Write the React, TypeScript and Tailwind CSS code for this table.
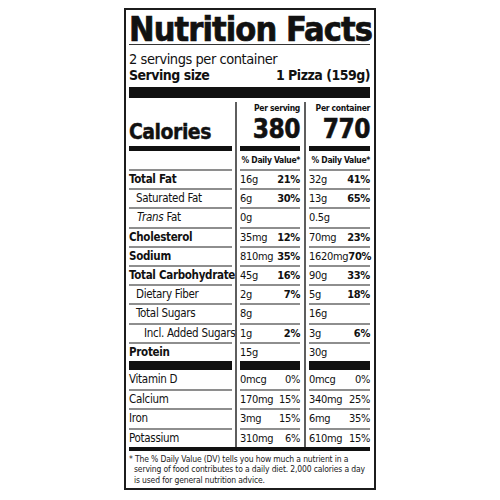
import type { ReactNode } from "react";

type Nutrient = {
  label: ReactNode;
  bold?: boolean;
  indent?: string;
  a: string;
  ap?: string;
  b: string;
  bp?: string;
};

const nutrients: Nutrient[] = [
  { label: "Total Fat", bold: true, a: "16g", ap: "21%", b: "32g", bp: "41%" },
  { label: "Saturated Fat", indent: "pl-[7px]", a: "6g", ap: "30%", b: "13g", bp: "65%" },
  { label: <><i>Trans</i> Fat</>, indent: "pl-[8px]", a: "0g", b: "0.5g" },
  { label: "Cholesterol", bold: true, a: "35mg", ap: "12%", b: "70mg", bp: "23%" },
  { label: "Sodium", bold: true, a: "810mg", ap: "35%", b: "1620mg", bp: "70%" },
  { label: "Total Carbohydrate", bold: true, a: "45g", ap: "16%", b: "90g", bp: "33%" },
  { label: "Dietary Fiber", indent: "pl-[7px]", a: "2g", ap: "7%", b: "5g", bp: "18%" },
  { label: "Total Sugars", indent: "pl-[7px]", a: "8g", b: "16g" },
  { label: "Incl. Added Sugars", indent: "pl-[15px]", a: "1g", ap: "2%", b: "3g", bp: "6%" },
  { label: "Protein", bold: true, a: "15g", b: "30g" },
];

const vitamins = [
  ["Vitamin D", "0mcg", "0%", "0mcg", "0%"],
  ["Calcium", "170mg", "15%", "340mg", "25%"],
  ["Iron", "3mg", "15%", "6mg", "35%"],
  ["Potassium", "310mg", "6%", "610mg", "15%"],
];

// vertical rule sitting in the gap between columns
function Gap({ wide }: { wide?: boolean }) {
  return (
    <div className={`flex justify-center ${wide ? "w-[9px]" : "w-[8px]"}`}>
      <div className="w-[2px] bg-[#5e5e5e]" />
    </div>
  );
}

function Cols({ className, label, a, b }: { className: string; label?: ReactNode; a?: ReactNode; b?: ReactNode }) {
  return (
    <div className={`flex ${className}`}>
      <div className="w-[103px] flex-none">{label}</div>
      <Gap />
      <div className="w-[60px] flex-none">{a}</div>
      <Gap wide />
      <div className="w-[61px] flex-none">{b}</div>
    </div>
  );
}

function Rule({ height, color }: { height: string; color: string }) {
  const bar = <div className={`h-full ${color}`} />;
  return <Cols className={height} label={bar} a={bar} b={bar} />;
}

function Amount({ v, p, boldPct }: { v: string; p?: string; boldPct?: boolean }) {
  return (
    <div className="flex h-full items-center justify-between whitespace-nowrap text-[11px] tracking-[-0.3px]">
      <span>{v}</span>
      {p && <span className={boldPct ? "font-bold" : ""}>{p}</span>}
    </div>
  );
}

export default function App() {
  return (
    <div className="flex min-h-[500px] justify-center bg-white">
      <div className="mt-[8px] h-[482px] w-[252px] border-2 border-[#1c1c1c] pl-[3px] pr-[4px] font-['DejaVu_Sans_Condensed','Liberation_Sans',sans-serif] text-[#111]">
        <div className="h-[35px] border-b border-[#333] pt-[3px]">
          <h1 className="h-[31px] text-[34px] font-bold leading-[32px] tracking-[-0.9px] whitespace-nowrap [-webkit-text-stroke:0.7px_#111]">
            Nutrition Facts
          </h1>
        </div>
        <p className="mt-[6px] text-[14.5px] leading-[16px] tracking-[-0.45px] whitespace-nowrap">
          2 servings per container
        </p>
        <div className="flex justify-between text-[14px] font-bold leading-[16px] tracking-[-0.5px] whitespace-nowrap">
          <span>Serving size</span>
          <span>1 Pizza (159g)</span>
        </div>
        <div className="mt-[4px] h-[11px] bg-[#111]" />

        <Cols
          className="mt-[4px] h-[44px]"
          label={
            <div className="flex h-full items-end pb-[3px] text-[21px] font-bold leading-[21px] tracking-[-0.5px] [-webkit-text-stroke:0.4px_#111]">
              Calories
            </div>
          }
          a={
            <div className="flex flex-col items-end whitespace-nowrap">
              <span className="pt-[1px] text-[8.5px] font-bold leading-[10px] tracking-[-0.3px]">Per serving</span>
              <span className="mt-[3px] text-[26px] font-bold leading-[26px] tracking-[-0.5px] [-webkit-text-stroke:0.5px_#111]">
                380
              </span>
            </div>
          }
          b={
            <div className="flex flex-col items-end whitespace-nowrap">
              <span className="pt-[1px] text-[8.5px] font-bold leading-[10px] tracking-[-0.3px]">Per container</span>
              <span className="mt-[3px] text-[26px] font-bold leading-[26px] tracking-[-0.5px] [-webkit-text-stroke:0.5px_#111]">
                770
              </span>
            </div>
          }
        />
        <Rule height="h-[5px]" color="bg-[#111]" />
        <Cols
          className="h-[18px] text-[8.5px] font-bold leading-[18px] tracking-[-0.3px] whitespace-nowrap"
          a={<div className="text-right">% Daily Value*</div>}
          b={<div className="text-right">% Daily Value*</div>}
        />

        {nutrients.map((n, i) => (
          <div key={i}>
            <Rule height="h-[2px]" color="bg-[#8e8e8e]" />
            <Cols
              className="h-[17.2px] text-[11.5px] leading-[17.2px]"
              label={
                <div className={`whitespace-nowrap tracking-[-0.3px] ${n.bold ? "font-bold" : ""} ${n.indent ?? ""}`}>
                  {n.label}
                </div>
              }
              a={<Amount v={n.a} p={n.ap} boldPct />}
              b={<Amount v={n.b} p={n.bp} boldPct />}
            />
          </div>
        ))}

        <Rule height="h-[9px]" color="bg-[#111]" />

        {vitamins.map((v, i) => (
          <div key={v[0]}>
            {i > 0 && <Rule height="h-[2px]" color="bg-[#8e8e8e]" />}
            <Cols
              className={`${i === 0 ? "h-[19px]" : "h-[17.5px]"} text-[11.5px] leading-[17.5px]`}
              label={<div className="flex h-full items-center tracking-[-0.3px]">{v[0]}</div>}
              a={<Amount v={v[1]} p={v[2]} />}
              b={<Amount v={v[3]} p={v[4]} />}
            />
          </div>
        ))}

        <div className="h-[4px] bg-[#111]" />
        <p className="pt-[2.5px] pl-[5px] -indent-[5px] text-[8.5px] leading-[10.5px] tracking-[-0.15px] whitespace-nowrap text-[#1a1a1a]">
          * The % Daily Value (DV) tells you how much a nutrient in a
          <br />
          serving of food contributes to a daily diet. 2,000 calories a day
          <br />
          is used for general nutrition advice.
        </p>
      </div>
    </div>
  );
}
